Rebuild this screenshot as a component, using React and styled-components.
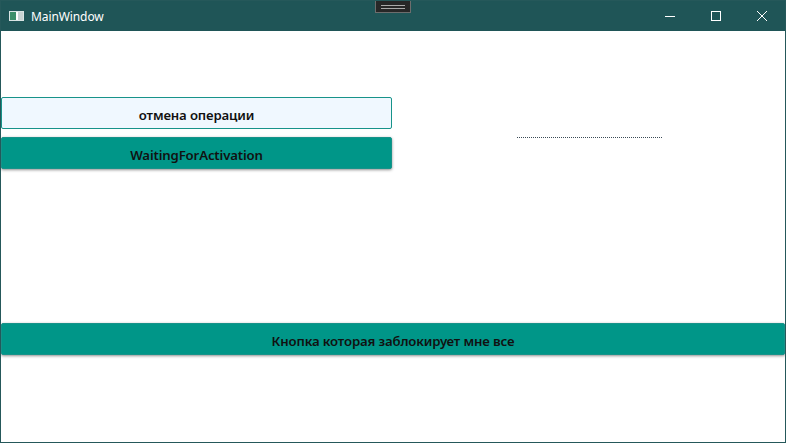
import React from 'react';
import styled, { createGlobalStyle } from 'styled-components';

const GlobalStyle = createGlobalStyle`
  html, body {
    margin: 0;
    padding: 0;
    background: #ffffff;
  }
  * {
    box-sizing: border-box;
  }
`;

const WindowFrame = styled.div`
  width: 786px;
  height: 443px;
  border: 1px solid #25585a;
  display: flex;
  flex-direction: column;
  background: #ffffff;
  font-family: "Noto Sans", "Open Sans", sans-serif;
  overflow: hidden;
`;

const TitleBar = styled.div`
  position: relative;
  height: 30px;
  flex: 0 0 30px;
  background: #1f5557;
  display: flex;
  align-items: center;
  color: #ffffff;
`;

const AppIcon = styled.div`
  width: 15px;
  height: 10px;
  margin-left: 8px;
  margin-right: 7px;
  border: 1px solid #d8e4e4;
  background: linear-gradient(to right, #3c8f6a 0 45%, #ffffff 45% 60%, #c7d3d3 60% 100%);
`;

const Title = styled.span`
  font-size: 12px;
  letter-spacing: -0.1px;
  flex: 1;
`;

const DragHandle = styled.div`
  position: absolute;
  left: 374px;
  top: -1px;
  width: 36px;
  height: 13px;
  background: #272727;
  border: 1px solid #6d6d6d;
  display: flex;
  flex-direction: column;
  justify-content: center;
  align-items: center;
  gap: 2px;

  &::before, &::after {
    content: '';
    display: block;
    width: 24px;
    height: 1px;
    background: #a9a9a9;
  }
`;

const Controls = styled.div`
  display: flex;
  height: 100%;
`;

const ControlButton = styled.div`
  width: 46px;
  height: 100%;
  display: flex;
  align-items: center;
  justify-content: center;
`;

const Content = styled.div`
  flex: 1;
  display: grid;
  grid-template-columns: 391px 1fr;
  grid-template-rows: 66px 32px 8px 33px 153px 32px 1fr;
  align-items: stretch;
`;

const LeftStack = styled.div`
  grid-column: 1;
  grid-row: 2 / span 3;
  display: flex;
  flex-direction: column;
  gap: 8px;
`;

const ActionButton = styled.button`
  height: 32px;
  width: 100%;
  border: 1px solid #17938a;
  border-radius: 2px;
  background: ${p => (p.$light ? '#f0f8ff' : '#009688')};
  color: #111;
  font-family: "Noto Sans", "Open Sans", sans-serif;
  font-weight: 600;
  font-size: 13.2px;
  letter-spacing: -0.15px;
  padding: 3px 0 0;
  display: flex;
  align-items: center;
  justify-content: center;
  box-shadow: ${p => (p.$light ? 'none' : '0 1px 3px rgba(0, 0, 0, 0.45)')};
  cursor: pointer;
`;

const DottedCell = styled.div`
  grid-column: 2;
  grid-row: 4;
  padding-left: 125px;
`;

const DottedLine = styled.div`
  width: 145px;
  border-top: 1px dotted #3a4a55;
`;

const BottomRow = styled.div`
  grid-column: 1 / span 2;
  grid-row: 6;
  display: flex;
`;

const IconSvg = styled.svg`
  display: block;
`;

export default function App() {
  return (
    <>
      <GlobalStyle />
      <WindowFrame>
        <TitleBar>
          <AppIcon />
          <Title>MainWindow</Title>
          <DragHandle />
          <Controls>
            <ControlButton>
              <IconSvg width="12" height="12" viewBox="0 0 12 12">
                <path d="M1 6.5h10" stroke="#fff" strokeWidth="1" />
              </IconSvg>
            </ControlButton>
            <ControlButton>
              <IconSvg width="12" height="12" viewBox="0 0 12 12">
                <rect x="1.5" y="1.5" width="9" height="9" fill="none" stroke="#fff" strokeWidth="1" />
              </IconSvg>
            </ControlButton>
            <ControlButton>
              <IconSvg width="12" height="12" viewBox="0 0 12 12">
                <path d="M1 1l10 10M11 1L1 11" stroke="#fff" strokeWidth="1" />
              </IconSvg>
            </ControlButton>
          </Controls>
        </TitleBar>
        <Content>
          <LeftStack>
            <ActionButton $light>отмена операции</ActionButton>
            <ActionButton>WaitingForActivation</ActionButton>
          </LeftStack>
          <DottedCell>
            <DottedLine />
          </DottedCell>
          <BottomRow>
            <ActionButton>Кнопка которая заблокирует мне все</ActionButton>
          </BottomRow>
        </Content>
      </WindowFrame>
    </>
  );
}
